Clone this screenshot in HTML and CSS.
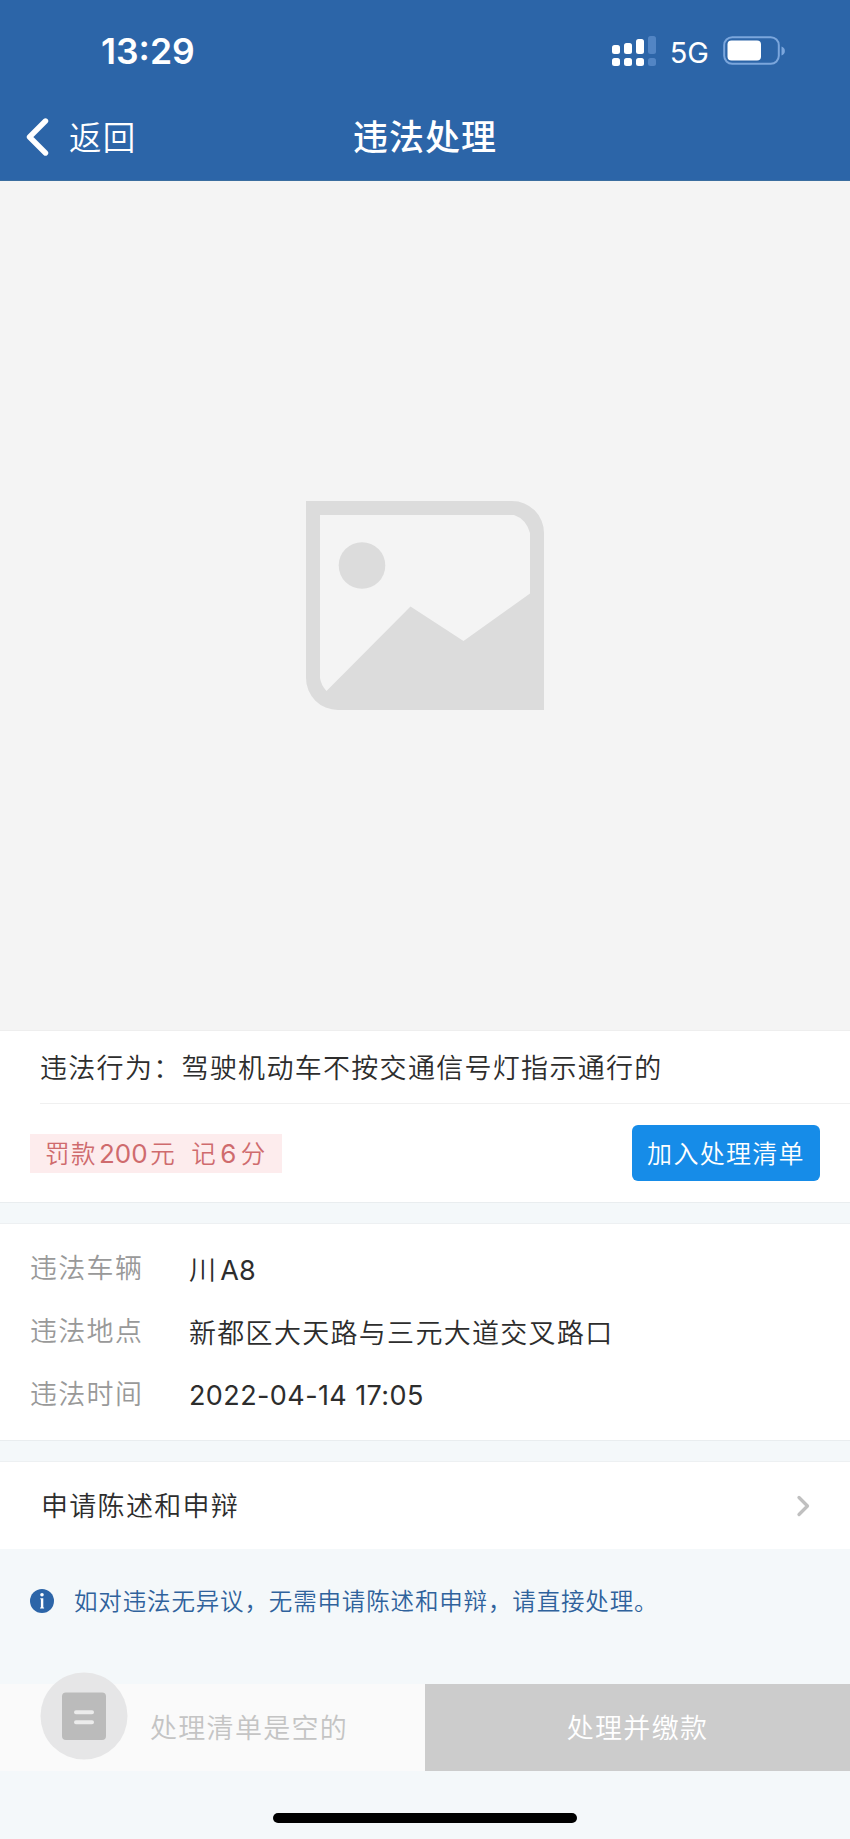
FILE: index.html
```
<!DOCTYPE html>
<html lang="zh-CN">
<head>
<meta charset="utf-8">
<title>违法处理</title>
<link rel="stylesheet" href="styles.css">
</head>
<body>
<div class="screen">
  <header class="header">
    <div class="status">
      <span class="clock">13:29</span>
      <div class="status-right">
        <svg class="signal" width="44" height="31" viewBox="0 0 44 31" fill="#fff">
          <rect x="0" y="9" width="8" height="9" rx="2.500"/><rect x="12" y="7" width="8" height="11" rx="2.500"/><rect x="24" y="3" width="8" height="15" rx="2.500"/>
          <rect x="0" y="22" width="8" height="8" rx="2.500"/><rect x="12" y="22" width="8" height="8" rx="2.500"/><rect x="24" y="22" width="8" height="8" rx="2.500"/>
          <g fill="#5285c4"><rect x="36" y="0" width="8" height="18" rx="2.500"/><rect x="36" y="22" width="8" height="8" rx="2.500"/></g>
        </svg>
        <span class="network">5G</span>
        <svg class="battery" width="63" height="30" viewBox="0 0 63 30">
          <rect x="1.2" y="1.2" width="54.6" height="26.6" rx="8" fill="none" stroke="#7ba6dc" stroke-width="2"/>
          <rect x="4.500" y="4.500" width="33.500" height="20" rx="4" fill="#fff"/>
          <path d="M58.5 10.500 C63 12 63 18 58.500 19.500Z" fill="#7ba6dc"/>
        </svg>
      </div>
    </div>
    <nav class="navbar">
      <div class="back">
        <svg width="24" height="40" viewBox="0 0 24 40" fill="none" stroke="#fff" stroke-width="5.400" stroke-linecap="round" stroke-linejoin="round"><path d="M19.500 4 3.500 20l16 16"/></svg>
        <span>返回</span>
      </div>
      <h1 class="title">违法处理</h1>
      <div></div>
    </nav>
  </header>

  <div class="photo">
    <svg width="238" height="209" viewBox="0 0 238 209">
      <path fill="#dcdcdc" fill-rule="evenodd" d="M0 0H206A32 32 0 0 1 238 32V209H32A32 32 0 0 1 0 177ZM14 14V177Q15 184 20.500 190L104.500 105.500 157.500 140 224 92.500V32Q220 18 208 14Z"/>
      <circle cx="56" cy="64.500" r="23.300" fill="#dcdcdc"/>
    </svg>
  </div>

  <section class="card summary">
    <div class="behavior">违法行为：驾驶机动车不按交通信号灯指示通行的</div>
    <div class="penalty-row">
      <div class="penalty"><span>罚款<span class="num">200</span>元</span><span>记<span class="num points">6</span>分</span></div>
      <button class="add">加入处理清单</button>
    </div>
  </section>

  <section class="card details">
    <div class="detail"><span class="label">违法车辆</span><span class="value">川<span class="latin plate">A8</span></span></div>
    <div class="detail"><span class="label">违法地点</span><span class="value">新都区大天路与三元大道交叉路口</span></div>
    <div class="detail"><span class="label">违法时间</span><span class="value latin date">2022-04-14 17:05</span></div>
  </section>

  <section class="card appeal">
    <span class="appeal-text">申请陈述和申辩</span>
    <svg width="14" height="22" viewBox="0 0 14 22" fill="none" stroke="#c0c0c0" stroke-width="3.300" stroke-linecap="round" stroke-linejoin="round"><path d="M3 2.500 11.500 11 3 19.500"/></svg>
  </section>

  <div class="notice">
    <svg width="24" height="24" viewBox="0 0 24 24"><circle cx="12" cy="12" r="12" fill="#2c65a8"/><g fill="#fff"><circle cx="12" cy="5.800" r="1.800"/><path d="M10.300 9.300h3v9.200h.8v1h-4v-1h.8v-8.200h-.6z"/></g></svg>
    <span>如对违法无异议，无需申请陈述和申辩，请直接处理。</span>
  </div>

  <footer class="bottom">
    <div class="basket">
      <svg class="basket-icon" width="88" height="88" viewBox="0 0 88 88">
        <circle cx="44" cy="44" r="43.500" fill="#e6e6e7"/>
        <rect x="22" y="20.500" width="44" height="47.500" rx="4" fill="#bbb"/>
        <path d="M36 40.200h16M36 50.200h16" stroke="#ececec" stroke-width="4" stroke-linecap="round"/>
      </svg>
      <span class="basket-text">处理清单是空的</span>
    </div>
    <button class="pay">处理并缴款</button>
  </footer>
  <div class="home-indicator"></div>
</div>
</body>
</html>
```
FILE: styles.css
```
* { box-sizing: border-box; }
body { margin: 0; }
.screen {
  width: 850px; height: 1839px; background: #f4f8fa; overflow: hidden;
  display: flex; flex-direction: column; align-items: stretch;
  font-family: Inter, "Noto Sans CJK SC DemiLight", "Noto Sans CJK SC", sans-serif;
  font-size: 27px; letter-spacing: 1.3px; color: #2d2d2d; white-space: nowrap;
  font-weight: 350;
}
button { border: 0; padding: 0; margin: 0; font: inherit; letter-spacing: inherit; color: inherit; }
svg { display: block; flex: none; }

.header { height: 181px; background: #2c65a8; color: #fff; border-bottom: 1px solid #3a6d9f; }
.status { height: 102px; padding: 0 64px 0 101px; display: flex; justify-content: space-between; align-items: center; }
.clock { padding-top: 1px; font-size: 35.500px; font-weight: 600; letter-spacing: 0; line-height: 1; }
.status-right { display: flex; align-items: center; }
.network { font-size: 29px; font-weight: 400; letter-spacing: 0; line-height: 1; margin: 2px 14px 0 14px; }
.battery { margin-top: -1px; }
.navbar { height: 70px; display: grid; grid-template-columns: 1fr auto 1fr; align-items: center; }
.back { display: flex; align-items: center; gap: 19px; padding-left: 26px; font-size: 32.500px; }
.back span { padding-bottom: 3px; }
.title { margin: 0; padding-bottom: 6px; font-family: "Noto Sans CJK SC", sans-serif; font-size: 35px; font-weight: 500; letter-spacing: 1px; }

.photo { height: 850px; background: #f4f4f4; border-bottom: 1px solid #eeeeee; display: flex; justify-content: center; align-items: flex-start; padding-top: 320px; }

.card { background: #fff; }
.summary { height: 172px; border-bottom: 1px solid #e9edef; }
.behavior { height: 73px; margin-left: 40px; padding-top: 2px; border-bottom: 1px solid #f0f0f0; line-height: 72px; }
.penalty-row { height: 98px; display: flex; justify-content: space-between; align-items: center; padding: 0 30px; }
.penalty { width: 252px; height: 39px; padding: 0 0 1px 15px; display: flex; gap: 15px; align-items: center; background: #fdeced; color: #cf6b6d; font-size: 24.500px; letter-spacing: 1.500px; }
.num { margin: 0 2.500px 0 2px; font-size: 26px; font-weight: 400; letter-spacing: 0; }
.points { margin: 0 4.500px 0 3px; }
.add { width: 188px; height: 56px; padding-bottom: 2px; border-radius: 6px; background: #168ce8; color: #fff; font-size: 25px; }

.details { height: 218px; margin-top: 20px; padding-top: 11px; border-top: 1px solid #edf0f2; border-bottom: 1px solid #e9edef; }
.detail { height: 63px; padding-left: 30px; display: grid; grid-template-columns: 159px 1fr; align-items: center; }
.label { color: #999; font-weight: 300; }
.value { padding-top: 3px; }
.latin { font-weight: 400; letter-spacing: 0; }
.date { padding-top: 6px; letter-spacing: .4px; }
.plate { margin-left: 3px; }

.appeal { height: 88px; margin-top: 20px; padding: 0 40px 0 41px; border-top: 1px solid #edf0f2; display: flex; justify-content: space-between; align-items: center; }
.appeal-text { padding-bottom: 2px; }

.notice { height: 135px; padding: 39px 0 0 30px; display: flex; align-items: flex-start; gap: 20px; color: #2f629c; font-size: 23.500px; letter-spacing: .85px; line-height: 27px; }
.notice svg { margin-top: 1px; }

.bottom { height: 87px; display: grid; grid-template-columns: 1fr 1fr; }
.basket { background: #fafafa; display: flex; align-items: center; gap: 22px; padding-left: 40px; color: #c4c4c4; font-weight: 300; }
.basket-icon { margin-top: -23px; }
.basket-text, .pay { padding-bottom: 2px; }
.pay { background: #ccc; color: #fff; }
.home-indicator { width: 304px; height: 10px; border-radius: 5px; background: #000; margin: 42px auto 0; }
```
